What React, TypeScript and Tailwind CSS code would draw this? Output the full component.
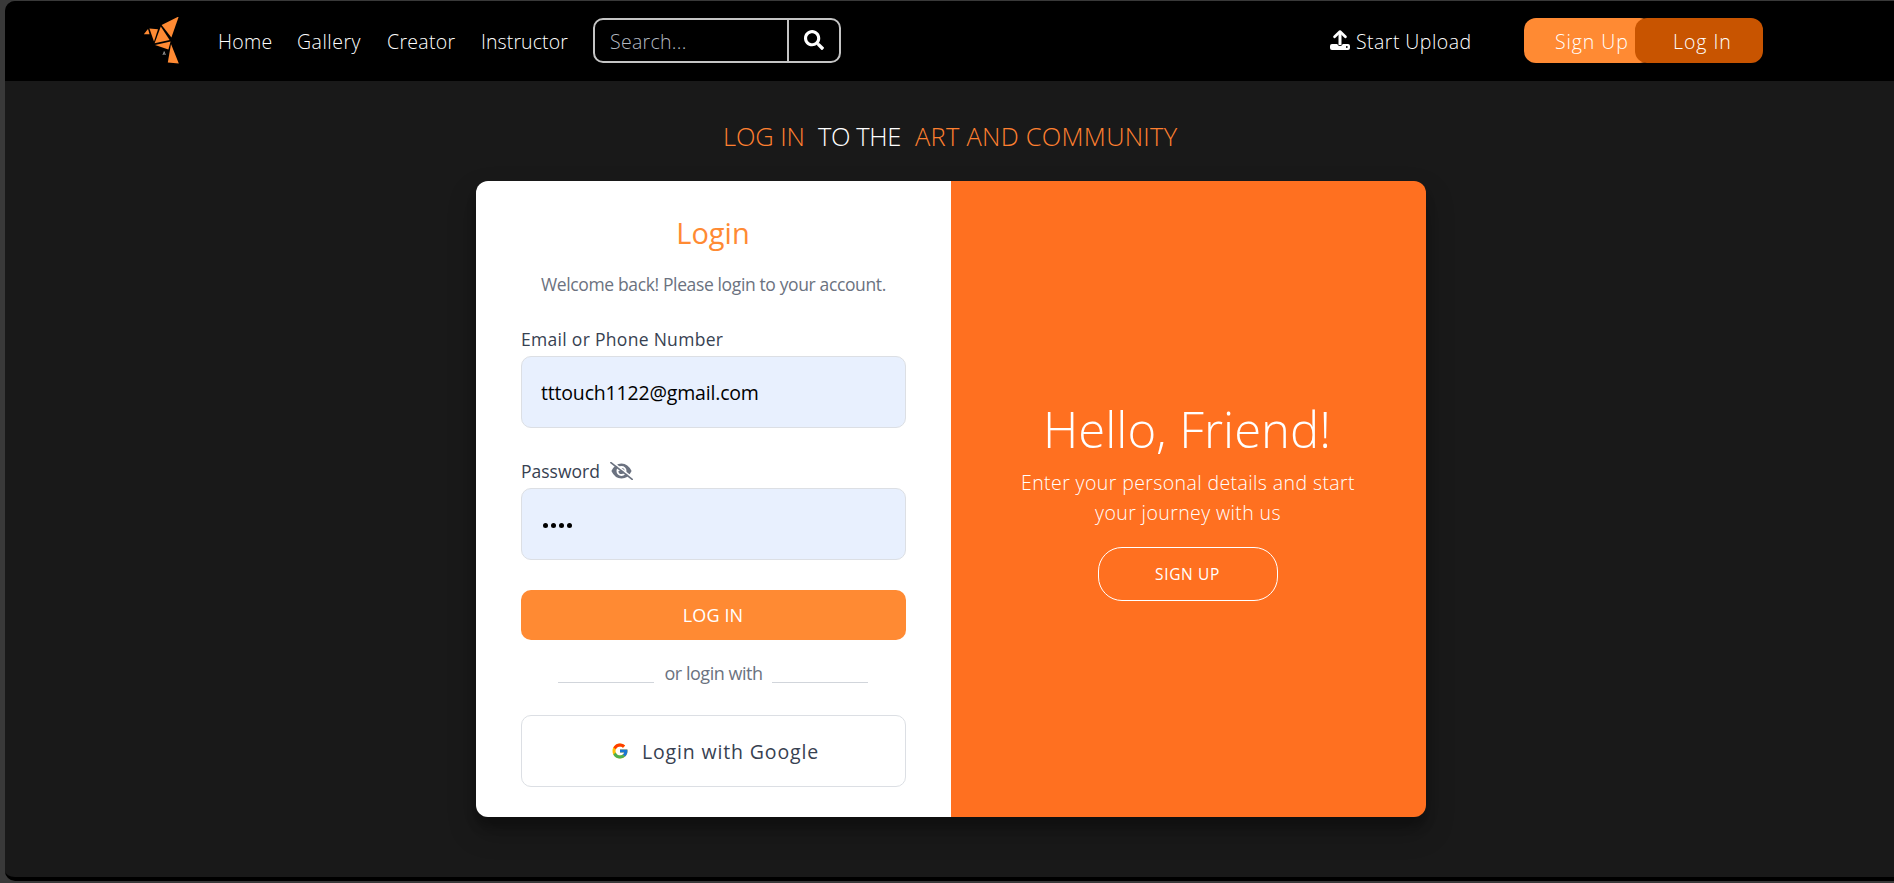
import React from "react";
import { FaSearch } from "react-icons/fa";
import { FcGoogle } from "react-icons/fc";

function BirdLogo() {
  return (
    <svg viewBox="0 0 36 48" className="mt-[2px] block h-12 w-9" fill="#ff8a33">
      <path d="M0.8 17.2 5 12 6.6 17.2Z" />
      <path d="M6.4 11.4 15 12.2 11 24.6Z" />
      <path d="M18.6 8 35.8-0.6 28.4 20.4Z" />
      <path d="M17.8 9.4 26.6 23 11.6 26.3Z" />
      <path d="M12 27.9 27.6 24.4 25.4 32.6Z" />
      <path d="M28 27 35.8 46.6 24.8 45.4Z" />
      <path d="M19.9 38 21.2 34.6 22.4 38M20.3 37H22" fill="none" stroke="#b5b5b5" strokeWidth="0.7" />
    </svg>
  );
}

function UploadIcon() {
  return (
    <svg viewBox="0 0 20 20" className="block size-5" fill="none">
      <path d="M10 15V3" stroke="#fff" strokeWidth="3" />
      <path d="M4.6 6.7 10 1.6 15.4 6.7" stroke="#fff" strokeWidth="2.7" strokeLinejoin="round" strokeLinecap="round" />
      <path
        d="M2 14H7.2A3 3 0 0 0 12.8 14H18Q20 14 20 16V18Q20 20 18 20H2Q0 20 0 18V16Q0 14 2 14Z"
        fill="#fff"
      />
      <circle cx="16.8" cy="17" r="0.9" fill="#000" />
    </svg>
  );
}

function EyeOffIcon() {
  return (
    <svg viewBox="0 0 23 18" className="block h-[18px] w-[23px]" fill="none">
      <path
        d="M1.4 9Q5 1.4 11.5 1.4T21.6 9Q18 16.6 11.5 16.6T1.4 9ZM11.5 4A5 5 0 1 0 11.5 14 5 5 0 1 0 11.5 4Z"
        fill="#6b7280"
        fillRule="evenodd"
      />
      <path d="M11.6 5.9A3.1 3.1 0 1 1 8.4 8.9Q10.9 9.2 11.6 5.9Z" fill="#6b7280" />
      <path d="M1.8-0.6 23.6 16.4" stroke="#fff" strokeWidth="1.6" />
      <path d="M0.9 0.7 22.2 17.3" stroke="#6b7280" strokeWidth="1.7" strokeLinecap="round" />
    </svg>
  );
}

function Header() {
  return (
    <header className="flex h-20 items-center bg-black pb-[2px] pl-[138px] text-[19.5px] font-light text-white">
      <BirdLogo />
      <nav className="flex pt-[4px] pl-[39px] whitespace-nowrap">
        <a className="w-[79px] tracking-[0.25px]">Home</a>
        <a className="w-[90px] tracking-[0.5px]">Gallery</a>
        <a className="w-[94px] tracking-[0.3px]">Creator</a>
        <a className="w-[112px] tracking-[0.1px]">Instructor</a>
      </nav>
      <div className="flex h-[45px] w-[248px] rounded-[10px] border-2 border-[#c4c4c4]">
        <div className="flex w-[194px] items-center border-r-2 border-[#c4c4c4] pt-[4px] pl-[15px] tracking-[0.3px] text-[#b4b9c0]">
          Search...
        </div>
        <div className="flex flex-1 items-center justify-center">
          <FaSearch className="size-5" />
        </div>
      </div>
      <div className="ml-[489px] flex items-center gap-[6px]">
        <UploadIcon />
        <span className="w-[168px] pt-[4px] tracking-[0.45px] whitespace-nowrap">Start Upload</span>
      </div>
      <div className="flex whitespace-nowrap">
        <div className="flex h-[45px] w-32 shrink-0 items-center rounded-xl bg-[#ff8a33] pt-[4px] pl-[31px] tracking-[0.9px]">
          Sign Up
        </div>
        <div className="-ml-[17px] flex h-[45px] w-32 shrink-0 items-center rounded-xl bg-[#c85400] pt-[4px] pl-[38px] tracking-[0.95px]">
          Log In
        </div>
      </div>
    </header>
  );
}

function LoginForm() {
  return (
    <div className="flex w-[475px] flex-col bg-white px-[45px] whitespace-nowrap">
      <h2 className="mt-[30px] h-[43px] pr-px text-center text-[29px] leading-[43px] text-[#ff8a33]">Login</h2>
      <p className="mt-[16px] h-7 text-center text-[17.5px] leading-7 tracking-[-0.37px] text-[#6b7280]">
        Welcome back! Please login to your account.
      </p>
      <div className="mt-[26px] h-[32px] text-[17.5px] leading-[31px] tracking-[0.3px] text-[#374151]">
        Email or Phone Number
      </div>
      <div className="flex h-[72px] items-center rounded-[10px] border border-[#dcdfe4] bg-[#e8f0fe] pt-[2px] pl-[19px] text-[19.5px] tracking-[-0.18px] text-black">
        tttouch1122@gmail.com
      </div>
      <div className="mt-[26px] flex h-[34px] items-center text-[17.5px] leading-[32px] text-[#374151]">
        <span className="w-[89px] pb-px">Password</span>
        <span className="pb-px">
          <EyeOffIcon />
        </span>
      </div>
      <div className="flex h-[72px] items-center gap-[3px] rounded-[10px] border border-[#dcdfe4] bg-[#e8f0fe] pt-0.5 pl-[21px]">
        <i className="size-[5px] rounded-full bg-black" />
        <i className="size-[5px] rounded-full bg-black" />
        <i className="size-[5px] rounded-full bg-black" />
        <i className="size-[5px] rounded-full bg-black" />
      </div>
      <button className="mt-[30px] h-[50px] rounded-[10px] bg-[#ff8a33] pr-px text-[18px] tracking-[0.1px] text-white">
        LOG IN
      </button>
      <div className="mt-[16px] flex h-[59px] justify-center gap-[10px] pr-[2px] text-[18px] leading-[34px] text-[#6b7280]">
        <span className="h-[27px] w-24 border-b border-[#d1d5db]" />
        <span className="w-[98px] pl-px text-center tracking-[-0.48px]">or login with</span>
        <span className="h-[27px] w-24 border-b border-[#d1d5db]" />
      </div>
      <button className="flex h-[72px] items-center rounded-[10px] border border-[#dcdfe4] pl-[89px] text-[19.5px] text-[#374151]">
        <FcGoogle className="size-[18px]" />
        <span className="pt-[2px] pl-[13px] tracking-[0.85px]">Login with Google</span>
      </button>
    </div>
  );
}

function WelcomePanel() {
  return (
    <div className="flex w-[475px] flex-col items-center bg-[#ff7020] pr-[2px] font-light whitespace-nowrap text-white">
      <h1 className="mt-[212px] h-[72px] pr-px text-[49px] leading-[72px]">Hello, Friend!</h1>
      <p className="mt-[3px] pl-px text-center text-[19.5px] leading-[30px] tracking-[0.4px]">
        Enter your personal details and start
        <br />
        your journey with us
      </p>
      <button className="mt-[19px] h-[54px] w-[180px] rounded-[24px] border border-white pt-[2px] text-[15.5px] font-normal tracking-[0.65px]">
        SIGN UP
      </button>
    </div>
  );
}

export default function App() {
  return (
    <div className="h-[883px] w-[1894px] overflow-hidden bg-[#393939] pt-px pl-[5px] font-['Open_Sans',sans-serif]">
      <div className="h-[880px] overflow-hidden rounded-l-[10px] border-b-4 border-black bg-[#191919]">
        <Header />
        <main className="flex flex-col items-start">
          <h3 className="mt-[35px] flex h-[40px] pl-[718px] text-[25.5px] leading-[40px] font-light whitespace-nowrap">
            <span className="w-[95px] tracking-[-0.1px] text-[#ff8030]">LOG IN</span>
            <span className="w-[96px] tracking-[-0.4px] text-white">TO THE</span>
            <span className="pl-px tracking-[0.25px] text-[#ff8030]">ART AND COMMUNITY</span>
          </h3>
          <section className="mt-[25px] ml-[471px] flex h-[636px] w-[950px] overflow-hidden rounded-xl shadow-[0_14px_28px_rgba(0,0,0,0.25),0_10px_10px_rgba(0,0,0,0.22)]">
            <LoginForm />
            <WelcomePanel />
          </section>
        </main>
      </div>
    </div>
  );
}
